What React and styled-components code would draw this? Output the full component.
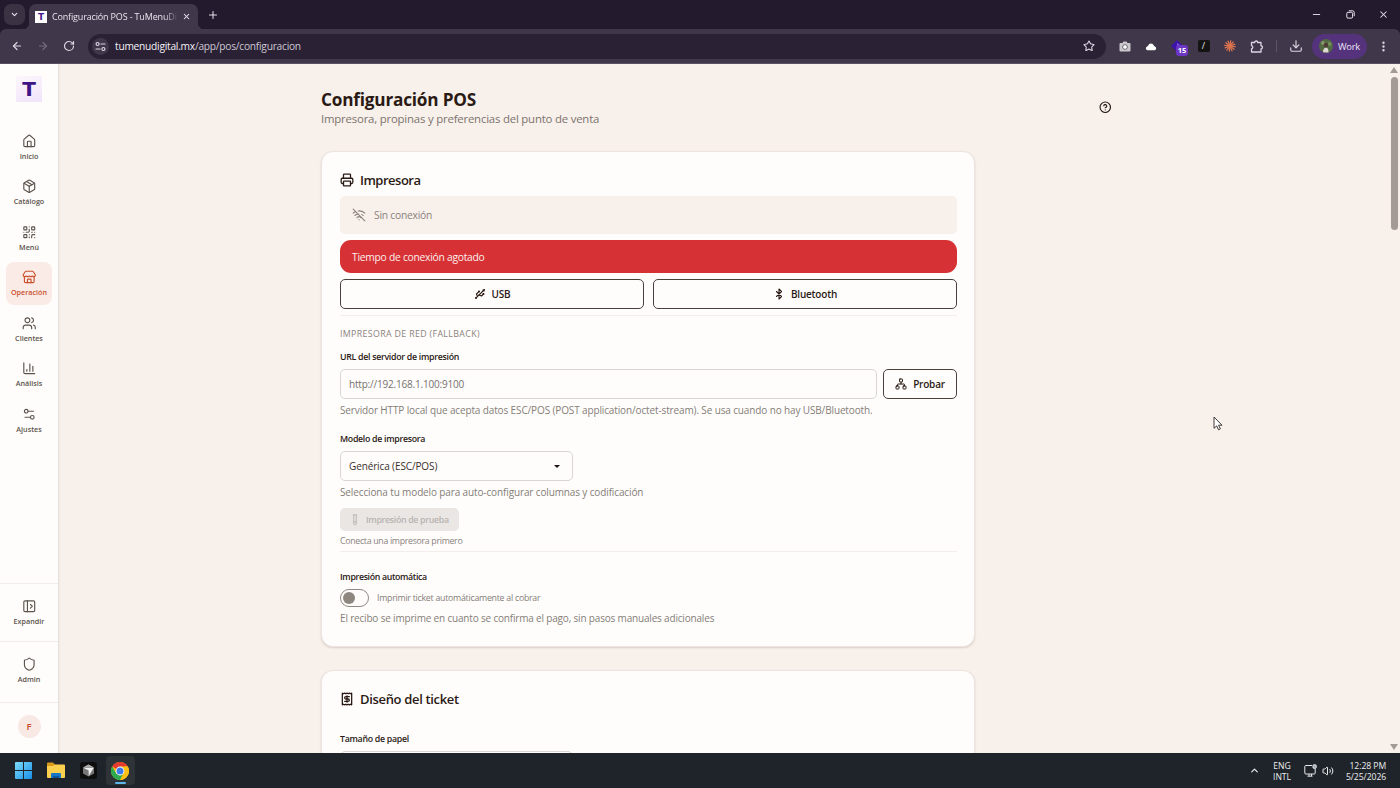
import React from "react";
import styled, { createGlobalStyle, css } from "styled-components";
import {
  ChevronDown, X, Plus, ArrowLeft, ArrowRight, RotateCw, Star, Download,
  EllipsisVertical, Minus, House, Package, QrCode, Store, Users, ChartColumn, Settings2,
  PanelLeftOpen, Shield, CircleHelp, Printer, WifiOff, Usb, Bluetooth, Network, TestTube,
  Receipt, ChevronUp, Volume2,
} from "lucide-react";

const Global = createGlobalStyle`
  * { box-sizing: border-box; }
  html, body { margin: 0; height: 100%; overflow: hidden; }
  body { font-family: "Open Sans", "Noto Sans", sans-serif; color: #2b1a14; }
  svg { display: block; flex: none; }
`;

const Screen = styled.div`
  width: 1400px;
  height: 788px;
  display: flex;
  flex-direction: column;
  overflow: hidden;
  background: #f7f0eb;
`;

/* Text line with a fixed line box */
const Text = styled.div`
  font-size: ${(p) => p.$size}px;
  line-height: ${(p) => p.$lh || 16}px;
  height: ${(p) => p.$lh || 16}px;
  font-weight: ${(p) => p.$weight || 400};
  letter-spacing: ${(p) => p.$ls || 0}px;
  color: ${(p) => p.$color || "inherit"};
  margin-top: ${(p) => p.$mt || 0}px;
  white-space: nowrap;
`;

/* Browser */
const TabStrip = styled.div`
  height: 29px;
  background: #231b2d;
  display: flex;
  align-items: flex-end;
  padding-left: 4px;
  color: #e9e3ee;
`;
const TabSearch = styled.div`
  width: 21px;
  height: 21px;
  margin-bottom: 4px;
  border-radius: 7px;
  background: #3b3344;
  display: grid;
  place-items: center;
`;
const Tab = styled.div`
  position: relative;
  width: 169px;
  height: 25px;
  margin-left: 4px;
  padding: 0 7px 0 6px;
  display: flex;
  align-items: center;
  gap: 5px;
  background: #40374a;
  border-radius: 7px 7px 0 0;
  &::before, &::after {
    content: "";
    position: absolute;
    bottom: 0;
    width: 6px;
    height: 6px;
  }
  &::before { left: -6px; background: radial-gradient(circle at 0 0, transparent 6px, #40374a 6.3px); }
  &::after { right: -6px; background: radial-gradient(circle at 100% 0, transparent 6px, #40374a 6.3px); }
`;
const Favicon = styled.div`
  width: 12px;
  height: 12px;
  background: #fff;
  color: #42158a;
  font: 700 9px/12px "DejaVu Sans", sans-serif;
  text-align: center;
  flex: none;
`;
const TabTitle = styled.div`
  flex: 1;
  white-space: nowrap;
  font-size: 9px;
  line-height: 14px;
  letter-spacing: -0.16px;
  mask-image: linear-gradient(90deg, #000 90%, transparent 101%);
`;
const NewTab = styled.div`
  margin: 0 0 8px 9px;
`;
const WindowControls = styled.div`
  margin-left: auto;
  display: flex;
  align-items: center;
  gap: 23.5px;
  padding: 0 11px 9px 0;
`;
const Toolbar = styled.div`
  height: 34px;
  background: #40374a;
  border-radius: 6px 6px 0 0;
  display: flex;
  align-items: center;
  padding: 0 0 0 11px;
  color: #ddd6e2;
`;
const ToolbarWrap = styled.div`
  background: #231b2d;
  border-bottom: 1px solid #5a5163;
`;
const NavButtons = styled.div`
  display: flex;
  gap: 14px;
  width: 77px;
`;
const Omnibox = styled.div`
  width: 1018px;
  height: 25px;
  border-radius: 13px;
  background: #2a2134;
  display: flex;
  align-items: center;
  padding: 0 11px 0 4px;
`;
const SiteInfo = styled.div`
  width: 17px;
  height: 17px;
  border-radius: 50%;
  background: #40374a;
  display: grid;
  place-items: center;
  margin-right: 6px;
`;
const Url = styled.div`
  flex: 1;
  font-size: 10.2px;
  line-height: 16px;
  letter-spacing: -0.24px;
  color: #cfc7d5;
  b { font-weight: 400; color: #f5f1f8; }
`;
const Extensions = styled.div`
  display: flex;
  align-items: center;
  flex: 1;
  padding-left: 12px;
`;
const Slot = styled.div`
  position: relative;
  width: ${(p) => p.$w}px;
  height: 20px;
  display: grid;
  place-items: center;
`;
const CountBadge = styled.div`
  position: absolute;
  left: 6px;
  top: 9px;
  width: 12px;
  height: 11px;
  border-radius: 3px;
  background: #6c35c4;
  color: #fff;
  font-size: 7.5px;
  line-height: 11px;
  font-weight: 700;
  text-align: center;
`;
const SlashTile = styled.div`
  width: 12px;
  height: 12px;
  border-radius: 2px;
  background: #141414;
  color: #e6e6e6;
  font-size: 9px;
  line-height: 12px;
  text-align: center;
`;
const Separator = styled.div`
  width: 1px;
  height: 12px;
  background: #5c5367;
  margin: 0 7px 0 0;
`;
const Profile = styled.div`
  width: 55px;
  height: 25px;
  border-radius: 13px;
  background: #54337c;
  color: #eee3f8;
  display: flex;
  align-items: center;
  gap: 5px;
  padding-left: 7px;
  font-size: 9.3px;
  letter-spacing: -0.25px;
`;

/* Page frame */
const Page = styled.div`
  flex: 1;
  min-height: 0;
  display: flex;
`;
const Sidebar = styled.nav`
  width: 59px;
  flex: none;
  background: #fefdfb;
  border-right: 1px solid #e6dfda;
  box-shadow: 0 0 2px rgba(80, 50, 40, 0.1);
  display: flex;
  flex-direction: column;
  align-items: center;
`;
const Logo = styled.div`
  width: 26px;
  height: 26px;
  margin-top: 12px;
  background: linear-gradient(160deg, #fdf6fc, #f0e4fa);
  color: #3f1484;
  font: 700 20px/26px "DejaVu Sans", sans-serif;
  text-align: center;
`;
const NavList = styled.div`
  display: flex;
  flex-direction: column;
  gap: 2px;
  margin-top: 23px;
`;
const NavEntry = styled.div`
  width: 46px;
  height: 43.6px;
  padding-top: 8.5px;
  border-radius: 8px;
  display: flex;
  flex-direction: column;
  align-items: center;
  gap: 2.5px;
  color: #5d534d;
  font-size: 7.2px;
  line-height: 10px;
  font-weight: 600;
  ${(p) => p.$active && css`
    background: #fbebe7;
    color: #c9502c;
  `}
`;
const NavGroup = styled.div`
  width: 58px;
  border-top: 1px solid #f2edea;
  display: flex;
  justify-content: center;
  height: ${(p) => p.$h}px;
  padding-top: ${(p) => p.$pt}px;
  margin-top: ${(p) => (p.$push ? "auto" : 0)};
`;
const Avatar = styled.div`
  width: 23px;
  height: 23px;
  border-radius: 50%;
  background: #f9e9e5;
  color: #c9502c;
  font-size: 9.5px;
  line-height: 23px;
  font-weight: 600;
  text-align: center;
`;
const Main = styled.main`
  flex: 1;
  overflow: hidden;
  display: flex;
  flex-direction: column;
  align-items: center;
  padding: 25px 0 0 1px;
`;
const Content = styled.div`
  width: 806px;
`;
const PageHeader = styled.header`
  display: flex;
  justify-content: space-between;
  height: 62px;
`;
const HelpButton = styled.div`
  width: 44px;
  height: 36px;
  display: grid;
  place-items: center;
`;
const Card = styled.section`
  width: 654px;
  height: ${(p) => p.$h}px;
  padding: 17px 17px 0 18px;
  background: #fefdfc;
  border: 1px solid #ede4df;
  border-radius: 12px;
  box-shadow: 0 1px 2px rgba(70, 40, 30, 0.16);
  margin-bottom: 23px;
`;
const CardTitle = styled.div`
  display: flex;
  align-items: center;
  gap: 6px;
  height: 22px;
`;
const StatusBox = styled.div`
  margin-top: 5px;
  height: 38px;
  border-radius: 5px;
  background: #f7f0eb;
  color: #8b827c;
  display: flex;
  align-items: center;
  gap: 8px;
  padding-left: 12px;
`;
const ErrorBox = styled.div`
  margin-top: 6px;
  height: 33px;
  border-radius: 11px;
  background: #d63235;
  color: #fdeeed;
  display: flex;
  align-items: center;
  padding-left: 12px;
`;
const ButtonRow = styled.div`
  display: flex;
  gap: 9px;
  margin-top: 6px;
`;
const OutlineButton = styled.div`
  height: 30px;
  flex: ${(p) => (p.$w ? "none" : 1)};
  width: ${(p) => (p.$w ? `${p.$w}px` : "auto")};
  border: 1px solid #4a403b;
  border-radius: 5px;
  display: flex;
  align-items: center;
  justify-content: center;
  gap: 6px;
`;
const Divider = styled.div`
  height: 1px;
  background: #f3eeeb;
  margin-top: ${(p) => p.$mt}px;
`;
const FieldRow = styled.div`
  display: flex;
  gap: 6px;
  margin-top: 4px;
`;
const Input = styled.div`
  width: ${(p) => p.$w}px;
  height: 30px;
  border: 1px solid #d9d5d2;
  border-radius: 5px;
  padding: 0 12px 0 8px;
  display: flex;
  align-items: center;
  justify-content: space-between;
`;
const Caret = styled.div`
  border: 3px solid transparent;
  border-top: 3px solid #1d1512;
  border-bottom: 0;
`;
const DisabledButton = styled.div`
  width: 119px;
  height: 23px;
  margin-top: 8px;
  border-radius: 5px;
  background: #e9e6e4;
  color: #b9b4b1;
  display: flex;
  align-items: center;
  gap: 5px;
  padding-left: 9px;
`;
const SwitchRow = styled.div`
  display: flex;
  align-items: center;
  gap: 8px;
  margin-top: 4px;
`;
const Switch = styled.div`
  width: 29px;
  height: 18px;
  border: 1px solid #8f8983;
  border-radius: 9px;
  padding: 2px;
  &::after {
    content: "";
    display: block;
    width: 12px;
    height: 12px;
    border-radius: 50%;
    background: #8d8780;
  }
`;
const ScrollTrack = styled.div`
  width: 12px;
  flex: none;
  display: flex;
  flex-direction: column;
  align-items: center;
  padding: 3px 0 3px 0;
  color: #a29a96;
`;
const Thumb = styled.div`
  width: 7px;
  height: 153px;
  border-radius: 4px;
  background: #a59b96;
  margin: 4px 0 auto 0;
`;
const Pointer = styled.div`
  position: absolute;
  left: 1213px;
  top: 416px;
`;

/* Taskbar */
const Taskbar = styled.div`
  height: 35px;
  flex: none;
  background: #1f242a;
  display: flex;
  align-items: center;
  padding: 0 7px 0 9px;
  color: #eceef0;
`;
const TaskSlot = styled.div`
  position: relative;
  width: 29px;
  height: 29px;
  margin-right: 3.3px;
  border-radius: 4px;
  display: grid;
  place-items: center;
  ${(p) => p.$active && css`
    background: #2e3338;
    &::after {
      content: "";
      position: absolute;
      bottom: 1px;
      left: 9px;
      width: 11px;
      height: 2px;
      border-radius: 1px;
      background: #5db5e8;
    }
  `}
`;
const Tray = styled.div`
  margin-left: auto;
  display: flex;
  align-items: center;
`;
const TrayText = styled.div`
  font-size: 8.6px;
  line-height: 11.7px;
  letter-spacing: -0.05px;
  text-align: ${(p) => p.$align || "center"};
  white-space: nowrap;
`;

const NAV = [
  [House, "Inicio"],
  [Package, "Catálogo"],
  [QrCode, "Menú"],
  [Store, "Operación"],
  [Users, "Clientes"],
  [ChartColumn, "Análisis"],
  [Settings2, "Ajustes"],
];

function NavItem({ icon: Icon, label, active }) {
  return (
    <NavEntry $active={active}>
      <Icon size={14.5} strokeWidth={1.9} />
      {label}
    </NavEntry>
  );
}

const WindowsLogo = () => (
  <svg width="17" height="17" viewBox="0 0 17 17">
    <defs>
      <linearGradient id="win" x1="0" y1="0" x2="1" y2="1">
        <stop offset="0" stopColor="#7fdcfb" />
        <stop offset="1" stopColor="#1790e6" />
      </linearGradient>
    </defs>
    <path fill="url(#win)" d="M1 0h7v8H0V1a1 1 0 0 1 1-1zM9 0h7a1 1 0 0 1 1 1v7H9zM0 9h8v8H1a1 1 0 0 1-1-1zM9 9h8v7a1 1 0 0 1-1 1H9z" />
  </svg>
);
const FolderIcon = () => (
  <svg width="18" height="17" viewBox="0 0 18 17">
    <path fill="#d99a1c" d="M0 1.5A1 1 0 0 1 1 .5h5l2 2v4H0z" />
    <path fill="#fbd04f" d="M0 4h6l2-1.5h9a1 1 0 0 1 1 1V15a1 1 0 0 1-1 1H1a1 1 0 0 1-1-1z" />
    <path fill="#1677c9" d="M4 12a1 1 0 0 1 1-1h8a1 1 0 0 1 1 1v4H4z" />
    <path fill="#0f5596" d="M6 14h6v2H6z" />
  </svg>
);
const CubeIcon = () => (
  <svg width="17" height="17" viewBox="0 0 17 17">
    <rect width="17" height="17" rx="3" fill="#0e0e0f" />
    <path fill="#777" d="M8.5 2.5 14 5.5v6l-5.5 3L3 11.5v-6z" />
    <path fill="#f4f4f4" d="M3.3 5.7h10.4L8.7 14V8.5z" />
    <path fill="#aaa" d="M3 5.5 8.5 2.5 14 5.5z" />
  </svg>
);
const ChromeIcon = () => (
  <svg width="18" height="18" viewBox="0 0 18 18">
    <circle cx="9" cy="9" r="9" fill="#fbc116" />
    <path fill="#e33b2e" d="M9 9 1.2 4.5A9 9 0 0 1 16.8 4.5H9z" />
    <path fill="#2da94f" d="M9 18A9 9 0 0 1 1.2 4.5L5.1 11.25 9 13.5l3-.7z" />
    <path fill="#fbc116" d="M9 18l3.9-6.75L13 4.5h3.8A9 9 0 0 1 9 18z" />
    <circle cx="9" cy="9" r="4.4" fill="#fff" />
    <circle cx="9" cy="9" r="3.5" fill="#3c7bea" />
  </svg>
);
const Burst = () => (
  <svg width="12" height="12" viewBox="-6 -6 12 12" stroke="#dd7450" strokeWidth="1.3" strokeLinecap="round">
    {[0, 30, 60, 90, 120, 150].map((a) => (
      <line key={a} x1="-5.2" x2="5.2" y1="0" y2="0" transform={`rotate(${a + 8})`} />
    ))}
  </svg>
);
const TuneIcon = () => (
  <svg width="11" height="11" viewBox="0 0 11 11" fill="none" stroke="#ded7e3" strokeWidth="1.2" strokeLinecap="round">
    <circle cx="2.6" cy="3" r="1.5" /><path d="M6 3h4" />
    <circle cx="8.4" cy="8" r="1.5" /><path d="M1 8h4" />
  </svg>
);
const RestoreIcon = () => (
  <svg width="9" height="9" viewBox="0 0 9 9" fill="none" stroke="#e9e3ee">
    <rect x=".8" y="2.3" width="5.8" height="5.8" rx="1.2" />
    <path d="M2.8.8h3.7a1.7 1.7 0 0 1 1.7 1.7v3.7" />
  </svg>
);
const CameraIcon = () => (
  <svg width="12" height="11" viewBox="0 0 12 11">
    <path fill="#c9c6cc" d="M1.5 2h2L4.5.5h3l1 1.5h2A1 1 0 0 1 11.5 3v6.5a1 1 0 0 1-1 1h-9a1 1 0 0 1-1-1V3a1 1 0 0 1 1-1z" />
    <circle cx="6" cy="6" r="2.3" fill="none" stroke="#65606a" />
    <circle cx="6" cy="6" r="1.7" fill="#fff" />
  </svg>
);
const CloudIcon = () => (
  <svg width="12" height="10" viewBox="0 0 12 10">
    <path fill="#fff" d="M2.5 9.3a1.9 1.9 0 0 1-.3-3.7L3.2 4.6A2.9 2.9 0 0 1 8.8 4.6l1 1a1.9 1.9 0 0 1-.3 3.7z" />
  </svg>
);
const DiamondIcon = () => (
  <svg width="12" height="12" viewBox="0 0 12 12">
    <path fill="#3d14a8" d="M6 0l6 6-6 6-6-6z" />
    <path fill="#7d5be0" d="M6 3l3 2-3 2z" />
  </svg>
);
const PuzzleIcon = () => (
  <svg width="13" height="13" viewBox="0 0 13 13" fill="none" stroke="#ddd6e2" strokeWidth="1.3" strokeLinejoin="round">
    <path d="M1.5 2.5h3.2a1.5 1.5 0 0 1 3 0h3.3v3.3a1.5 1.5 0 0 1 0 3V12H1.5V9a1.7 1.7 0 0 0 0-3.3z" />
  </svg>
);
const PhotoAvatar = () => (
  <svg width="14" height="14" viewBox="0 0 14 14">
    <circle cx="7" cy="7" r="7" fill="#536b42" />
    <circle cx="4" cy="4" r="2" fill="#87936d" />
    <circle cx="10.5" cy="5" r="2" fill="#75915b" />
    <circle cx="7" cy="6" r="2.3" fill="#503c36" />
    <path fill="#ded9d4" d="M4 13.3c0-3 1-4.500 3-4.500s2.500 1.500 2.500 4.700z" />
  </svg>
);
const MonitorIcon = () => (
  <svg width="13" height="13" viewBox="0 0 13 13" fill="none" stroke="#e6e8ea">
    <path d="M8 1.5H1.8a1 1 0 0 0-1 1V9a1 1 0 0 0 1 1h8.400a1 1 0 0 0 1-1V4.500M3.500 12.200h5M5 10v2M7.500 10v2" />
    <rect x="9" y=".8" width="3.2" height="3.5" rx=".8" fill="#9fa3a7" />
  </svg>
);

function Browser() {
  return (
    <>
      <TabStrip>
        <TabSearch><ChevronDown size={9} strokeWidth={3} /></TabSearch>
        <Tab>
          <Favicon>T</Favicon>
          <TabTitle>Configuración POS - TuMenuDi</TabTitle>
          <X size={9} strokeWidth={2.8} />
        </Tab>
        <NewTab><Plus size={12} strokeWidth={2} /></NewTab>
        <WindowControls>
          <Minus size={11} strokeWidth={2} />
          <RestoreIcon />
          <X size={11} strokeWidth={2.2} />
        </WindowControls>
      </TabStrip>
      <ToolbarWrap>
        <Toolbar>
          <NavButtons>
            <ArrowLeft size={12} strokeWidth={2.4} />
            <ArrowRight size={12} strokeWidth={2.4} color="#756c7e" />
            <RotateCw size={12} strokeWidth={2.4} />
          </NavButtons>
          <Omnibox>
            <SiteInfo><TuneIcon /></SiteInfo>
            <Url><b>tumenudigital.mx</b>/app/pos/configuracion</Url>
            <Star size={12} strokeWidth={2.2} />
          </Omnibox>
          <Extensions>
            <Slot $w={13}><CameraIcon /></Slot>
            <Slot $w={39}><CloudIcon /></Slot>
            <Slot $w={14}>
              <DiamondIcon />
              <CountBadge>15</CountBadge>
            </Slot>
            <Slot $w={39}><SlashTile>/</SlashTile></Slot>
            <Slot $w={14}><Burst /></Slot>
            <Slot $w={39}><PuzzleIcon /></Slot>
            <Separator />
            <Slot $w={24}><Download size={14} strokeWidth={2} /></Slot>
          </Extensions>
          <Profile><PhotoAvatar />Work</Profile>
          <Slot $w={33}><EllipsisVertical size={13} strokeWidth={2.4} /></Slot>
        </Toolbar>
      </ToolbarWrap>
    </>
  );
}

const Label = (p) => <Text $size={8.8} $weight={600} $ls={-0.29} {...p} />;
const Hint = (p) => <Text $size={10} $color="#857d77" $ls={-0.13} {...p} />;

function PrinterCard() {
  return (
    <Card $h={496}>
      <CardTitle>
        <Printer size={14} strokeWidth={2.2} />
        <Text $size={13} $weight={600} $ls={-0.5}>Impresora</Text>
      </CardTitle>
      <StatusBox>
        <WifiOff size={14} strokeWidth={1.9} />
        <Text $size={10.3} $ls={-0.24}>Sin conexión</Text>
      </StatusBox>
      <ErrorBox><Text $size={10.3} $ls={-0.26}>Tiempo de conexión agotado</Text></ErrorBox>
      <ButtonRow>
        <OutlineButton><Usb size={12} strokeWidth={2.2} /><Text $size={10} $weight={600} $ls={-0.2}>USB</Text></OutlineButton>
        <OutlineButton><Bluetooth size={12} strokeWidth={2.2} /><Text $size={10} $weight={600} $ls={-0.2}>Bluetooth</Text></OutlineButton>
      </ButtonRow>
      <Divider $mt={6} />
      <Text $size={8.8} $weight={500} $color="#8b837d" $mt={10} $ls={0.36}>IMPRESORA DE RED (FALLBACK)</Text>
      <Label $mt={7}>URL del servidor de impresión</Label>
      <FieldRow>
        <Input $w={538}><Text $size={10} $ls={-0.19} $color="#77716d">http://192.168.1.100:9100</Text></Input>
        <OutlineButton $w={74}><Network size={12} strokeWidth={2} /><Text $size={10} $weight={600} $ls={-0.2}>Probar</Text></OutlineButton>
      </FieldRow>
      <Hint $mt={3}>Servidor HTTP local que acepta datos ESC/POS (POST application/octet-stream). Se usa cuando no hay USB/Bluetooth.</Hint>
      <Label $mt={13}>Modelo de impresora</Label>
      <FieldRow>
        <Input $w={233}><Text $size={10} $ls={-0.12} $color="#3a302b">Genérica (ESC/POS)</Text><Caret /></Input>
      </FieldRow>
      <Hint $mt={3}>Selecciona tu modelo para auto-configurar columnas y codificación</Hint>
      <DisabledButton>
        <TestTube size={12} strokeWidth={1.9} />
        <Text $size={8.9} $weight={600} $ls={-0.36}>Impresión de prueba</Text>
      </DisabledButton>
      <Text $size={8.8} $ls={-0.31} $color="#8b837d" $mt={2}>Conecta una impresora primero</Text>
      <Divider $mt={2} />
      <Label $mt={17} $ls={-0.35}>Impresión automática</Label>
      <SwitchRow>
        <Switch />
        <Text $size={8.8} $ls={-0.26} $color="#857d77">Imprimir ticket automáticamente al cobrar</Text>
      </SwitchRow>
      <Hint $mt={3} $ls={-0.18}>El recibo se imprime en cuanto se confirma el pago, sin pasos manuales adicionales</Hint>
    </Card>
  );
}

export default function App() {
  return (
    <Screen>
      <Global />
      <Browser />
      <Page>
        <Sidebar>
          <Logo>T</Logo>
          <NavList>
            {NAV.map(([icon, label]) => (
              <NavItem key={label} icon={icon} label={label} active={label === "Operación"} />
            ))}
          </NavList>
          <NavGroup $h={58} $pt={6} $push><NavItem icon={PanelLeftOpen} label="Expandir" /></NavGroup>
          <NavGroup $h={61} $pt={6}><NavItem icon={Shield} label="Admin" /></NavGroup>
          <NavGroup $h={51} $pt={12}><Avatar>F</Avatar></NavGroup>
        </Sidebar>
        <Main>
          <Content>
            <PageHeader>
              <div>
                <Text $size={17.2} $weight={700} $lh={22} $ls={-0.2}>Configuración POS</Text>
                <Text $size={11.4} $color="#7d736d" $ls={-0.2}>Impresora, propinas y preferencias del punto de venta</Text>
              </div>
              <HelpButton><CircleHelp size={12.5} strokeWidth={2.2} /></HelpButton>
            </PageHeader>
            <PrinterCard />
            <Card $h={300}>
              <CardTitle>
                <Receipt size={14} strokeWidth={2.2} />
                <Text $size={13} $weight={600} $ls={-0.33}>Diseño del ticket</Text>
              </CardTitle>
              <Label $mt={21}>Tamaño de papel</Label>
              <FieldRow><Input $w={233} /></FieldRow>
            </Card>
          </Content>
        </Main>
        <ScrollTrack>
          <svg width="8" height="6" viewBox="0 0 8 6"><path fill="currentColor" d="M4 0l4 6H0z" /></svg>
          <Thumb />
          <svg width="8" height="6" viewBox="0 0 8 6"><path fill="currentColor" d="M4 6l4-6H0z" /></svg>
        </ScrollTrack>
      </Page>
      <Taskbar>
        <TaskSlot><WindowsLogo /></TaskSlot>
        <TaskSlot><FolderIcon /></TaskSlot>
        <TaskSlot><CubeIcon /></TaskSlot>
        <TaskSlot $active><ChromeIcon /></TaskSlot>
        <Tray>
          <ChevronUp size={11} strokeWidth={2.6} />
          <Slot $w={44}><TrayText>ENG<br />INTL</TrayText></Slot>
          <MonitorIcon />
          <Slot $w={22}><Volume2 size={12} strokeWidth={2} /></Slot>
          <Slot $w={54}><TrayText $align="right">12:28 PM<br />5/25/2026</TrayText></Slot>
        </Tray>
      </Taskbar>
      <Pointer>
        <svg width="10" height="15" viewBox="0 0 10 15"><path fill="#fff" stroke="#2c2624" strokeWidth=".9" strokeLinejoin="round" d="M1 1v11.3l2.7-2.4 1.8 3.9 1.9-.9-1.8-3.7H9z" /></svg>
      </Pointer>
    </Screen>
  );
}
